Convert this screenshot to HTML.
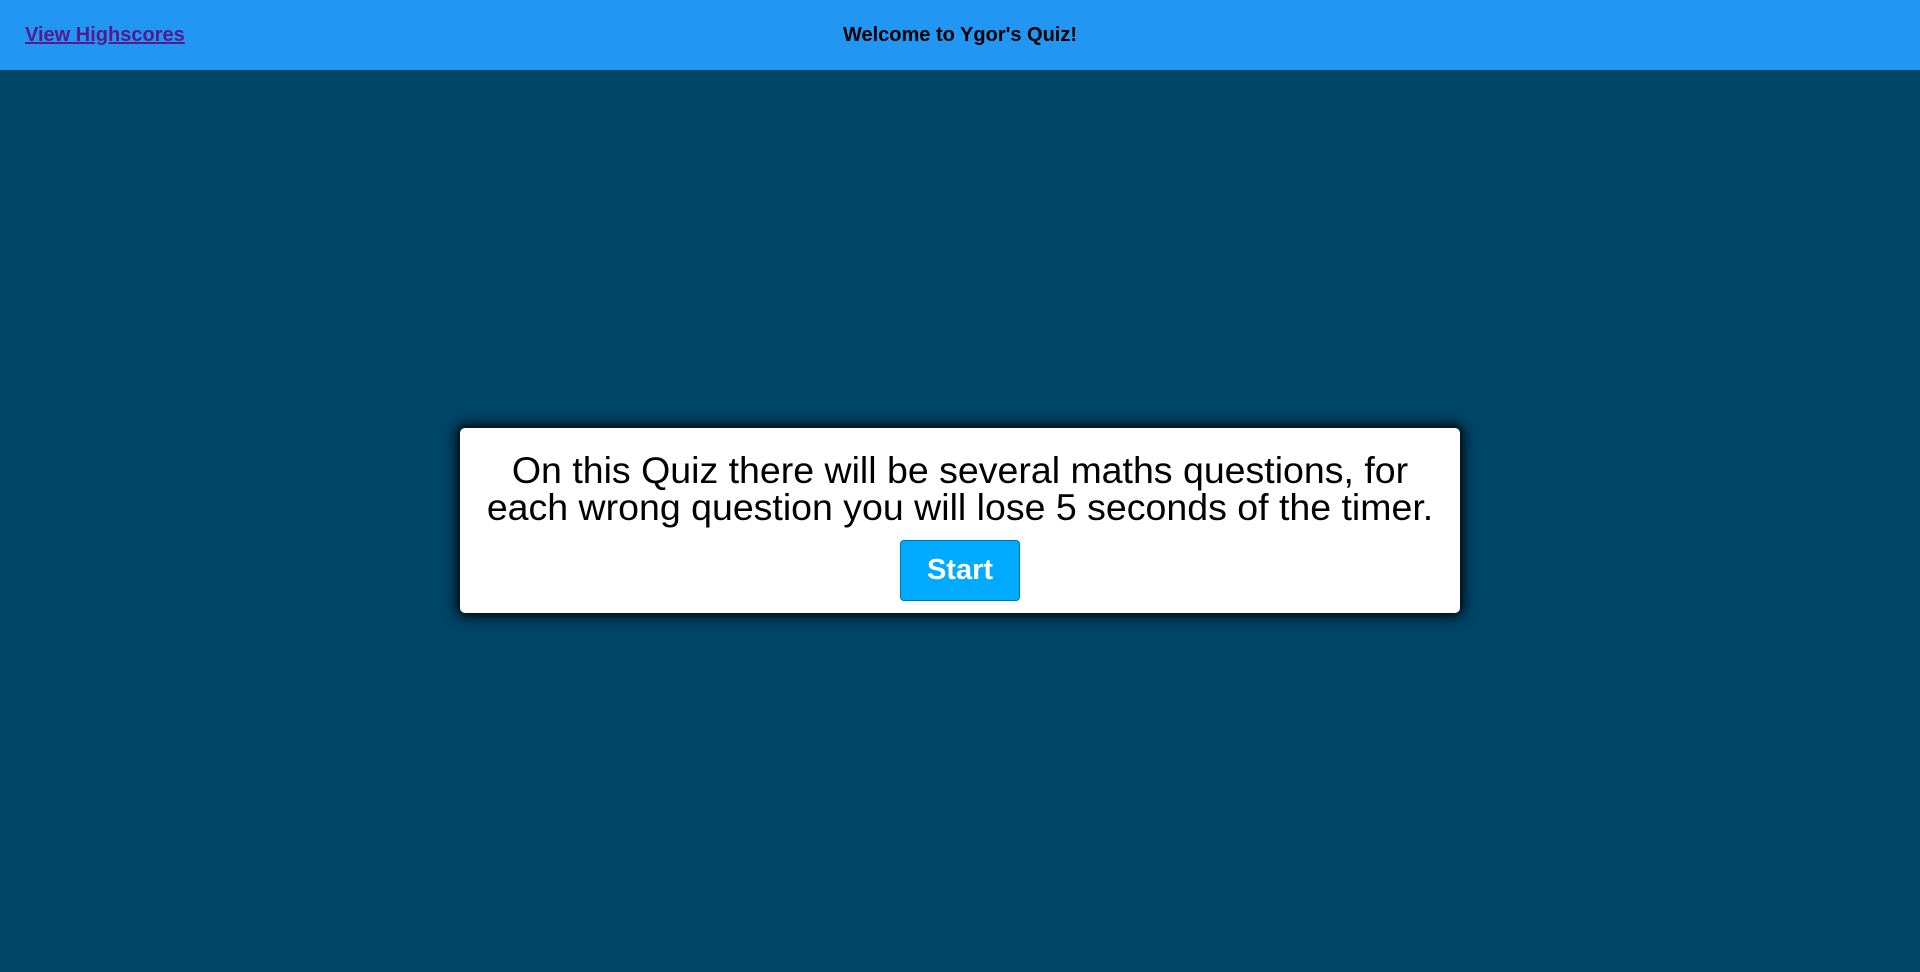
<!DOCTYPE html>
<html><head><style>
html,body{margin:0;padding:0;width:1920px;height:972px;background:#004466;font-family:"Liberation Sans",Arial,sans-serif;overflow:hidden}
header{height:70px;background:#2196f3;position:relative}
header a{position:absolute;left:25px;top:24px;font-size:20px;font-weight:bold;color:#551a8b;text-decoration:underline}
header h1{margin:0;position:absolute;left:0;right:0;top:24px;text-align:center;font-size:20px;font-weight:bold;color:#000}
.card{position:absolute;left:460px;top:428px;width:1000px;height:185px;background:#fff;border-radius:5px;box-shadow:0 0 12px 3px #000;text-align:center}
.card p{margin:24px 0 0;font-size:37.5px;line-height:37px;color:#000}
.card button{position:absolute;left:440px;top:112px;width:120px;height:61px;background:#00aaff;border:1px solid #0077aa;border-radius:4px;color:#fff;font-weight:bold;font-size:29px;font-family:"Liberation Sans",Arial,sans-serif}
</style></head><body>
<header><a>View Highscores</a><h1>Welcome to Ygor's Quiz!</h1></header>
<div class="card"><p>On this Quiz there will be several maths questions, for<br>each wrong question you will lose 5 seconds of the timer.</p><button>Start</button></div>
</body></html>
